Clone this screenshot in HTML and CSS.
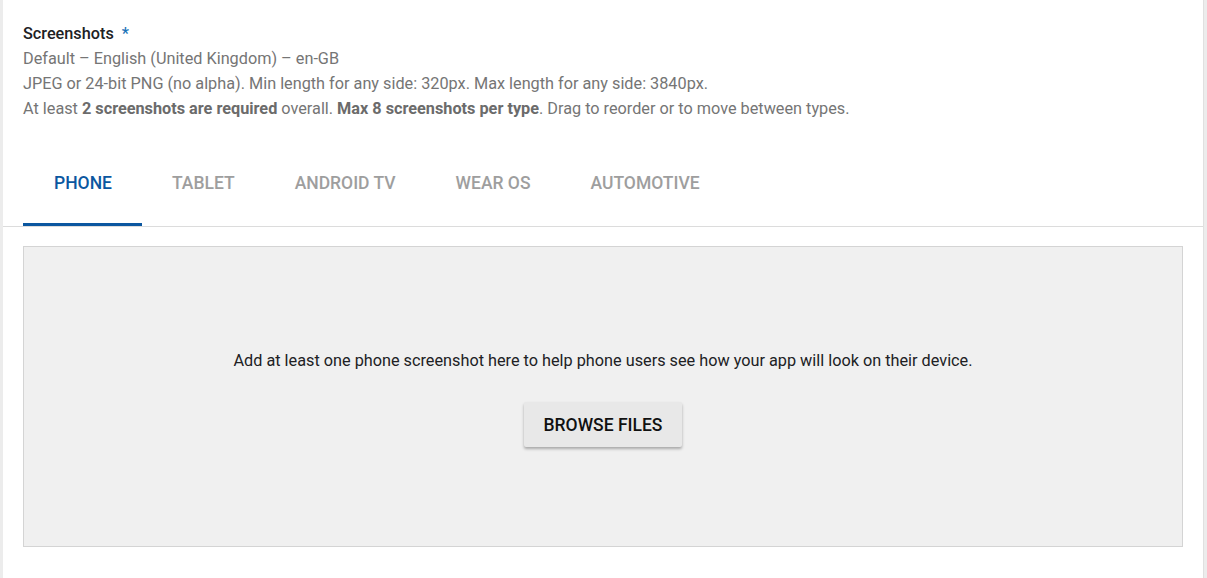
FILE: index.html
```html
<!DOCTYPE html>
<html lang="en">
<head>
<meta charset="utf-8">
<title>Screenshots</title>
<link rel="stylesheet" href="styles.css">
</head>
<body>
<div class="card">
  <div class="header">
    <div class="title">Screenshots <span class="req">*</span></div>
    <div class="desc">Default – English (United Kingdom) – en-GB</div>
    <div class="desc">JPEG or 24-bit PNG (no alpha). Min length for any side: 320px. Max length for any side: 3840px.</div>
    <div class="desc">At least <b>2 screenshots are required</b> overall. <b>Max 8 screenshots per type</b>. Drag to reorder or to move between types.</div>
  </div>
  <div class="tabs">
    <div class="tab active">PHONE</div>
    <div class="tab">TABLET</div>
    <div class="tab">ANDROID TV</div>
    <div class="tab">WEAR OS</div>
    <div class="tab">AUTOMOTIVE</div>
  </div>
  <div class="body">
    <div class="drop">
      <div class="drop-text">Add at least one phone screenshot here to help phone users see how your app will look on their device.</div>
      <button class="browse">BROWSE FILES</button>
    </div>
  </div>
</div>
</body>
</html>
```
FILE: styles.css
```css
html, body {
  margin: 0;
  padding: 0;
}
body {
  background: #ececec;
  font-family: Roboto, "Liberation Sans", sans-serif;
  height: 578px;
  overflow: hidden;
}
.card {
  margin-left: 3px;
  width: 1200px;
  background: #fff;
  min-height: 600px;
  border-right: 1px solid #e0e0e0;
}
.header {
  padding: 21px 20px 0 20px;
}
.title {
  font-size: 16.25px;
  font-weight: 500;
  color: #202124;
  line-height: 25px;
}
.req {
  color: #1a73b8;
  margin-left: 4px;
}
.desc {
  font-size: 16.25px;
  color: #757575;
  line-height: 25px;
}
.desc b {
  font-weight: 700;
  color: #6b6b6b;
}
.tabs {
  display: flex;
  margin-top: 18px;
  padding-left: 20px;
  border-bottom: 1px solid #dcdcdc;
}
.tab {
  height: 87px;
  padding: 3px 30px 0 30px;
  display: flex;
  align-items: center;
  font-size: 17.5px;
  font-weight: 500;
  color: #9e9e9e;
  box-sizing: border-box;
  border-bottom: 3px solid transparent;
}
.tab:first-child {
  padding-left: 31px;
}
.tab.active {
  color: #0b57a0;
  border-bottom-color: #0b57a0;
}
.body {
  padding: 19px 20px 0 20px;
}
.drop {
  height: 301px;
  box-sizing: border-box;
  background: #f0f0f0;
  border: 1px solid #d4d4d4;
  display: flex;
  flex-direction: column;
  align-items: center;
  padding-top: 103px;
}
.drop-text {
  font-size: 16.25px;
  color: #202124;
  line-height: 22px;
}
.browse {
  margin-top: 30px;
  width: 158px;
  height: 45px;
  border: none;
  border-radius: 2px;
  background: #e8e8e8;
  box-shadow: 0 2px 3px rgba(0,0,0,0.3);
  font-family: Roboto, "Liberation Sans", sans-serif;
  font-size: 17.5px;
  font-weight: 500;
  color: #111;
  cursor: pointer;
}
```
